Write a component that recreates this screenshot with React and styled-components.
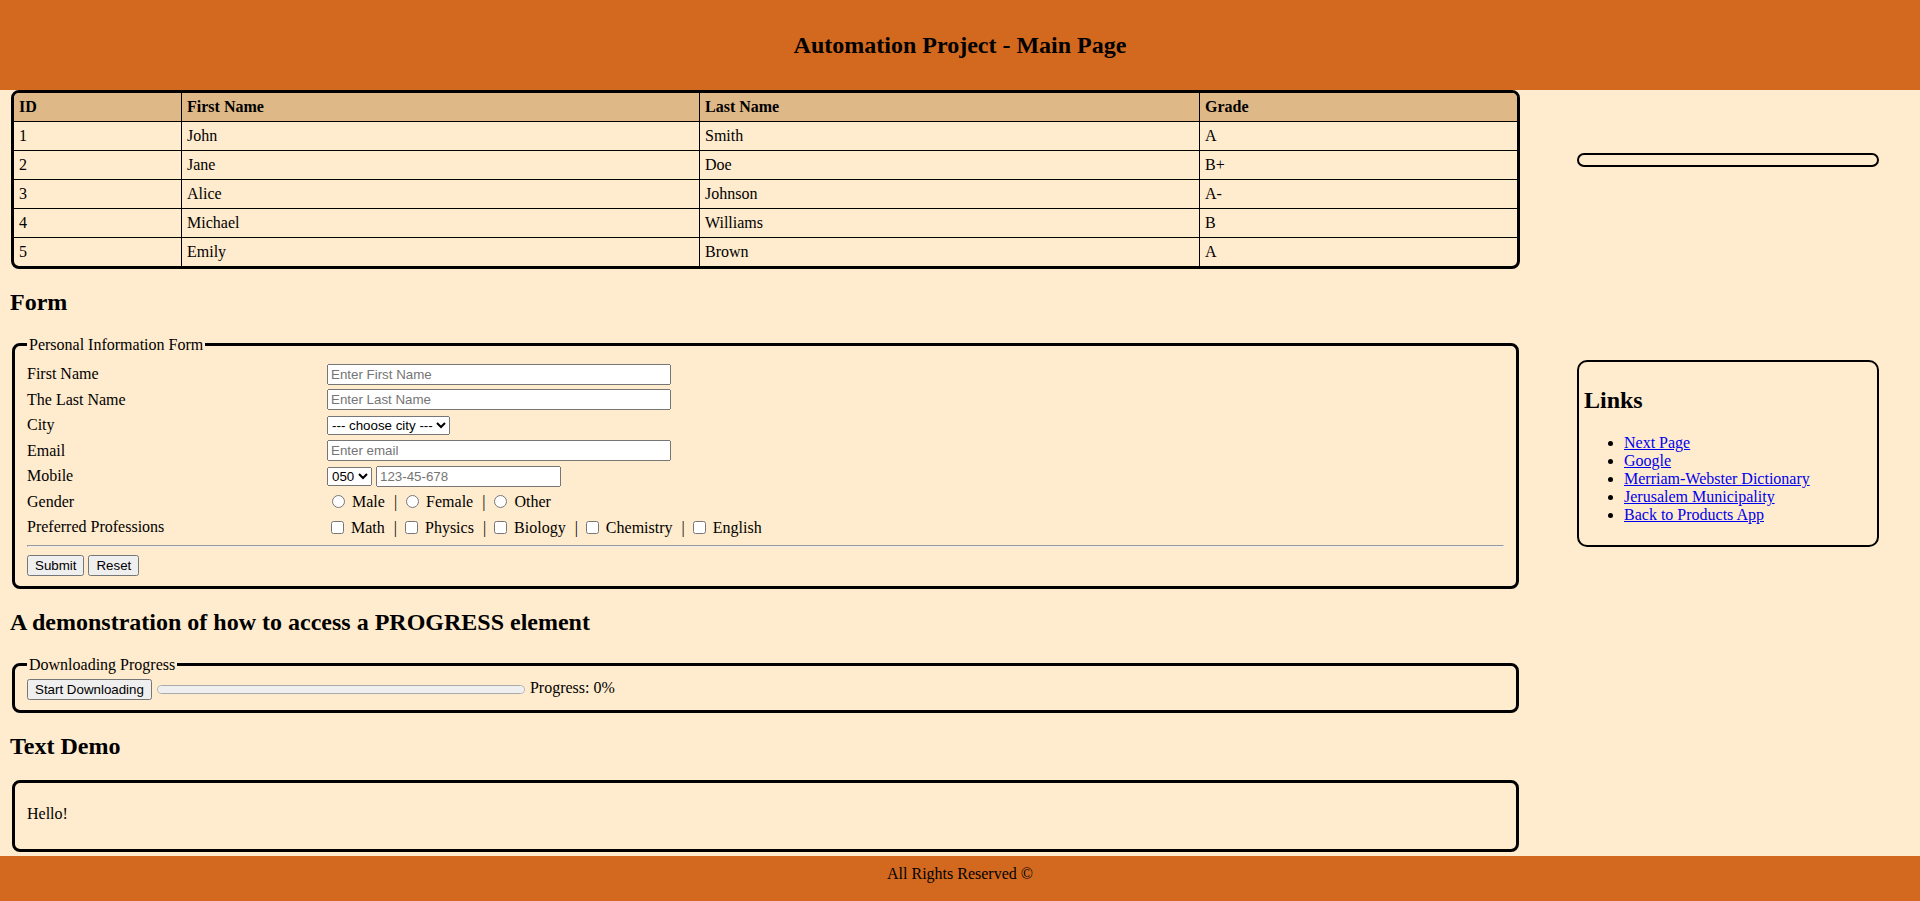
import styled, { createGlobalStyle } from "styled-components";

const GlobalStyle = createGlobalStyle`
  html, body {
    margin: 0;
    height: 100%;
  }
  body {
    font-family: "Liberation Serif", "Times New Roman", serif;
    font-size: 16px;
    color: #000;
    background-color: #ffebcd;
  }
  #root {
    height: 100%;
  }
`;

const students = [
  { id: 1, first: "John", last: "Smith", grade: "A" },
  { id: 2, first: "Jane", last: "Doe", grade: "B+" },
  { id: 3, first: "Alice", last: "Johnson", grade: "A-" },
  { id: 4, first: "Michael", last: "Williams", grade: "B" },
  { id: 5, first: "Emily", last: "Brown", grade: "A" },
];

const columns = [
  { label: "ID", width: "168px" },
  { label: "First Name", width: "518px" },
  { label: "Last Name", width: "500px" },
  { label: "Grade", width: "auto" },
];

const links = [
  "Next Page",
  "Google",
  "Merriam-Webster Dictionary",
  "Jerusalem Municipality",
  "Back to Products App",
];

function Options({ type, name, items }) {
  return (
    <Field>
      {items.map((item, i) => (
        <span key={item}>
          {i > 0 && (
            <>
              {" "}
              <Separator>|</Separator>{" "}
            </>
          )}
          <input type={type} name={name} value={item} /> {item}
        </span>
      ))}
    </Field>
  );
}

export default function App() {
  return (
    <Page>
      <GlobalStyle />
      <Header>
        <h1>Automation Project - Main Page</h1>
      </Header>

      <Main>
        <Layout>
          <Content>
            <TableFrame>
              <Table>
                <thead>
                  <tr>
                    {columns.map((c) => (
                      <th key={c.label} style={{ width: c.width }}>
                        {c.label}
                      </th>
                    ))}
                  </tr>
                </thead>
                <tbody>
                  {students.map((s) => (
                    <tr key={s.id}>
                      <td>{s.id}</td>
                      <td>{s.first}</td>
                      <td>{s.last}</td>
                      <td>{s.grade}</td>
                    </tr>
                  ))}
                </tbody>
              </Table>
            </TableFrame>

            <SectionTitle>Form</SectionTitle>
            <form onSubmit={(e) => e.preventDefault()}>
              <Fieldset>
                <legend>Personal Information Form</legend>
                <FormGrid>
                  <span>First Name</span>
                  <Field>
                    <TextInput placeholder="Enter First Name" />
                  </Field>
                  <span>The Last Name</span>
                  <Field>
                    <TextInput placeholder="Enter Last Name" />
                  </Field>
                  <span>City</span>
                  <Field>
                    <Select defaultValue="">
                      <option value="">--- choose city ---</option>
                      <option>Jerusalem</option>
                      <option>Tel Aviv</option>
                      <option>Haifa</option>
                    </Select>
                  </Field>
                  <span>Email</span>
                  <Field>
                    <TextInput type="email" placeholder="Enter email" />
                  </Field>
                  <span>Mobile</span>
                  <Field>
                    <Select defaultValue="050">
                      <option>050</option>
                      <option>052</option>
                      <option>054</option>
                    </Select>{" "}
                    <PhoneInput placeholder="123-45-678" />
                  </Field>
                  <span>Gender</span>
                  <Options type="radio" name="gender" items={["Male", "Female", "Other"]} />
                  <span>Preferred Professions</span>
                  <Options
                    type="checkbox"
                    name="professions"
                    items={["Math", "Physics", "Biology", "Chemistry", "English"]}
                  />
                </FormGrid>
                <Divider />
                <Field>
                  <Button type="submit">Submit</Button> <Button type="reset">Reset</Button>
                </Field>
              </Fieldset>
            </form>

            <SectionTitle>A demonstration of how to access a PROGRESS element</SectionTitle>
            <Fieldset>
              <legend>Downloading Progress</legend>
              <Field>
                <Button type="button">Start Downloading</Button>{" "}
                <Progress value={0} max={100} /> Progress: 0%
              </Field>
            </Fieldset>

            <SectionTitle>Text Demo</SectionTitle>
            <Fieldset>
              <p>Hello!</p>
            </Fieldset>
          </Content>

          <Sidebar>
            <EmptyPanel />
            <LinksPanel>
              <h2>Links</h2>
              <ul>
                {links.map((l) => (
                  <li key={l}>
                    <a href="#">{l}</a>
                  </li>
                ))}
              </ul>
            </LinksPanel>
          </Sidebar>
        </Layout>
      </Main>

      <Footer>All Rights Reserved ©</Footer>
    </Page>
  );
}

const Page = styled.div`
  display: flex;
  flex-direction: column;
  height: 100vh;
`;

const Header = styled.header`
  flex: 0 0 90px;
  display: flex;
  align-items: center;
  justify-content: center;
  background-color: #d2691e;
  h1 {
    margin: 0;
    font-size: 24px;
    font-weight: bold;
  }
`;

const Main = styled.main`
  flex: 1;
  min-height: 0;
  overflow-y: auto;
`;

const Layout = styled.div`
  display: grid;
  grid-template-columns: 1fr 302px;
  column-gap: 56px;
  align-items: start;
  padding: 0 41px 4px 10px;
`;

const Content = styled.div`
  min-width: 0;
`;

const TableFrame = styled.div`
  margin: 0 1px;
  border: 3px solid #000;
  border-radius: 8px;
  overflow: hidden;
`;

const Table = styled.table`
  width: 100%;
  border-collapse: separate;
  border-spacing: 0;
  th,
  td {
    box-sizing: border-box;
    padding: 5px;
    line-height: 18px;
    text-align: left;
    border-right: 1px solid #000;
    border-bottom: 1px solid #000;
    &:last-child {
      border-right: none;
    }
  }
  th {
    background-color: #deb887;
    font-weight: bold;
  }
  tbody tr:last-child td {
    border-bottom: none;
  }
`;

const SectionTitle = styled.h2`
  margin: 19.92px 0;
  font-size: 24px;
  font-weight: bold;
`;

const Fieldset = styled.fieldset`
  margin: 0 2px;
  padding: 5.6px 12px 10px;
  border: 3px solid #000;
  border-radius: 8px;
  legend {
    padding: 0 2px;
  }
  p {
    margin: 16px 0;
  }
`;

const FormGrid = styled.div`
  display: grid;
  grid-template-columns: 300px 1fr;
  grid-auto-rows: 25.5px;
  align-items: center;
  padding-top: 2px;
`;

const Field = styled.div`
  white-space: nowrap;
  input[type="radio"],
  input[type="checkbox"] {
    vertical-align: -1px;
  }
`;

const controlFont = `
  font-family: "Liberation Sans", Arial, sans-serif;
  font-size: 13.333px;
`;

const TextInput = styled.input`
  ${controlFont}
  box-sizing: border-box;
  width: 344px;
  height: 21px;
  vertical-align: middle;
`;

const PhoneInput = styled(TextInput)`
  width: 185px;
`;

const Select = styled.select`
  ${controlFont}
  vertical-align: middle;
`;

const Separator = styled.span`
  margin-left: 5px;
`;

const Divider = styled.hr`
  margin: 5px 0 8px;
`;

const Button = styled.button`
  ${controlFont}
  vertical-align: middle;
`;

const Progress = styled.progress`
  appearance: none;
  box-sizing: border-box;
  width: 368px;
  height: 9px;
  margin: 0 1px;
  vertical-align: middle;
  border: 1px solid #a9a9a9;
  border-radius: 5px;
  background-color: #efefef;
  &::-webkit-progress-bar {
    background-color: #efefef;
    border-radius: 5px;
  }
  &::-webkit-progress-value {
    background-color: #1a73e8;
    border-radius: 5px;
  }
`;

const Sidebar = styled.aside`
  display: flex;
  flex-direction: column;
  padding-top: 63px;
`;

const EmptyPanel = styled.div`
  height: 10px;
  border: 2px solid #000;
  border-radius: 7px;
`;

const LinksPanel = styled.div`
  margin-top: 193px;
  padding: 5px;
  border: 2px solid #000;
  border-radius: 10px;
  h2 {
    margin: 19.92px 0;
    font-size: 24px;
  }
  ul {
    margin: 16px 0;
    padding-left: 40px;
  }
  a {
    color: #0000ee;
  }
`;

const Footer = styled.footer`
  flex: 0 0 45px;
  box-sizing: border-box;
  padding-top: 9px;
  text-align: center;
  background-color: #d2691e;
`;
